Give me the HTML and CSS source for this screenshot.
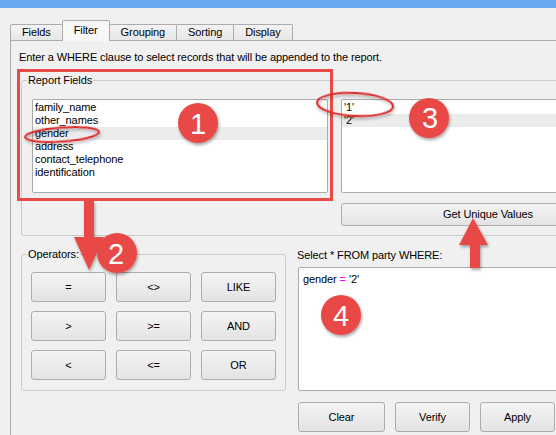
FILE: index.html
```html
<!DOCTYPE html>
<html>
<head>
<meta charset="utf-8">
<link rel="stylesheet" href="styles.css">
</head>
<body>
<div class="titlebar"></div>
<div class="tabs">
  <div class="tab first">Fields</div>
  <div class="tab active">Filter</div>
  <div class="tab">Grouping</div>
  <div class="tab">Sorting</div>
  <div class="tab">Display</div>
</div>
<div class="pane">
  <p class="hint">Enter a WHERE clause to select records that will be appended to the report.</p>
  <div class="group report">
    <span class="group-title">Report Fields</span>
    <div class="report-grid">
      <ul class="list fields">
        <li>family_name</li>
        <li>other_names</li>
        <li class="sel">gender</li>
        <li>address</li>
        <li>contact_telephone</li>
        <li>identification</li>
      </ul>
      <div class="values-col">
        <ul class="list values">
          <li>'1'</li>
          <li class="sel">'2'</li>
        </ul>
        <button class="btn unique">Get Unique Values</button>
      </div>
    </div>
  </div>
  <div class="lower">
    <div class="group operators">
      <span class="group-title">Operators:</span>
      <div class="op-grid">
        <button class="btn op-btn">=</button>
        <button class="btn op-btn">&lt;&gt;</button>
        <button class="btn op-btn">LIKE</button>
        <button class="btn op-btn">&gt;</button>
        <button class="btn op-btn">&gt;=</button>
        <button class="btn op-btn">AND</button>
        <button class="btn op-btn">&lt;</button>
        <button class="btn op-btn">&lt;=</button>
        <button class="btn op-btn">OR</button>
      </div>
    </div>
    <div class="sql">
      <div class="sql-label">Select * FROM party WHERE:</div>
      <div class="sql-box">gender <span class="kw">=</span> '2'</div>
      <div class="sql-actions">
        <button class="btn act clear">Clear</button>
        <button class="btn act">Verify</button>
        <button class="btn act">Apply</button>
      </div>
    </div>
  </div>
</div>
<svg class="annotations" width="556" height="435" viewBox="0 0 556 435">
  <defs>
    <filter id="sh" x="-30%" y="-30%" width="160%" height="180%">
      <feDropShadow dx="1" dy="2" stdDeviation="1.5" flood-color="#000" flood-opacity="0.35"/>
    </filter>
  </defs>
  <rect x="18.5" y="70.5" width="313" height="129" fill="none" stroke="#e84a46" stroke-width="3"/>
  <ellipse cx="62" cy="134.5" rx="37" ry="7" transform="rotate(-4 62 134.5)" fill="none" stroke="#dc2a2a" stroke-width="2" filter="url(#sh)"/>
  <ellipse cx="355" cy="104.5" rx="38" ry="11.5" transform="rotate(3 355 104.5)" fill="none" stroke="#dc2a2a" stroke-width="2" filter="url(#sh)"/>
  <path d="M84 201 H94 V237 H104 L89 270 L74 237 H84 Z" fill="#e84a46" filter="url(#sh)"/>
  <path d="M473 218 L488 245 H480 V268 H470 V245 H459 Z" fill="#e84a46" filter="url(#sh)"/>
  <g class="badge" filter="url(#sh)">
    <circle cx="198" cy="123" r="20" fill="#e84a46"/>
    <circle cx="117" cy="253" r="20" fill="#e84a46"/>
    <circle cx="429" cy="118" r="20" fill="#e84a46"/>
    <circle cx="341" cy="315" r="20" fill="#e84a46"/>
  </g>
  <g class="badge-num">
    <text x="198" y="133.5">1</text>
    <text x="116" y="263.5">2</text>
    <text x="430" y="128">3</text>
    <text x="341" y="325.5">4</text>
  </g>
</svg>
</body>
</html>
```

FILE: styles.css
```css
html, body {
  margin: 0;
  padding: 0;
}
body {
  width: 556px;
  height: 435px;
  overflow: hidden;
  position: relative;
  background: #f0f0f0;
  font-family: "Liberation Sans", Arial, sans-serif;
  font-size: 11px;
  line-height: 13px;
  letter-spacing: -0.1px;
  color: #000;
}
.titlebar {
  height: 8px;
  background: #69a9f1;
}
.tabs {
  display: flex;
  align-items: flex-end;
  height: 20px;
  margin: 12px 0 0 10px;
  position: relative;
  z-index: 1;
}
.tab {
  height: 15px;
  line-height: 15px;
  padding: 0 11px;
  border: 1px solid #acacac;
  border-bottom: none;
  border-radius: 2px 2px 0 0;
  background: linear-gradient(#f3f3f3, #e6e6e6);
  margin-left: -1px;
  white-space: nowrap;
}
.tab.first {
  margin-left: 0;
}
.tab.active {
  height: 20px;
  line-height: 19px;
  margin-bottom: -1px;
  background: #f7f7f7;
  position: relative;
  z-index: 2;
}
.pane {
  margin-left: 10px;
  border-top: 1px solid #acacac;
  border-left: 1px solid #acacac;
  padding: 10px 0 0 10px;
  height: 400px;
}
.hint {
  margin: 0 0 16px -2px;
  white-space: nowrap;
}
.group {
  position: relative;
  border: 1px solid #cbcbcb;
  border-radius: 3px;
}
.group-title {
  position: absolute;
  top: -7px;
  left: 5px;
  padding: 0 1px;
  background: #f0f0f0;
  white-space: nowrap;
}
.report {
  width: 603px;
  padding: 18px 10px 9px 10px;
}
.report-grid {
  display: grid;
  grid-template-columns: 296px 294px;
  column-gap: 13px;
  align-items: start;
}
.values-col {
  display: flex;
  flex-direction: column;
  gap: 10px;
}
.list {
  list-style: none;
  margin: 0;
  padding: 1px 0;
  height: 94px;
  box-sizing: border-box;
  background: #fff;
  border: 1px solid #ababab;
  border-radius: 2px;
}
.list li {
  height: 13px;
  padding-left: 2px;
  white-space: nowrap;
}
.list li.sel {
  background: #ececec;
}
.btn {
  font: inherit;
  letter-spacing: inherit;
  color: #000;
  padding: 0;
  margin: 0;
  background: linear-gradient(#f4f4f4, #e3e3e3);
  border: 1px solid #adadad;
  border-radius: 3px;
  box-sizing: border-box;
}
.unique {
  width: 294px;
  height: 23px;
}
.lower {
  display: flex;
  align-items: flex-start;
  gap: 12px;
  margin-top: 13px;
}
.operators {
  margin-top: 5px;
  padding: 17px 9px 10px 9px;
}
.op-grid {
  display: grid;
  grid-template-columns: repeat(3, 75px);
  grid-auto-rows: 30px;
  column-gap: 10px;
  row-gap: 9px;
}
.sql {
  width: 340px;
  flex: none;
}
.sql-label {
  margin-left: -1px;
  white-space: nowrap;
}
.sql-box {
  margin-top: 5px;
  height: 124px;
  box-sizing: border-box;
  padding: 5px 4px;
  background: #fff;
  border: 1px solid #ababab;
  border-radius: 2px;
  white-space: pre;
}
.kw {
  color: #ff00ff;
}
.sql-actions {
  display: flex;
  gap: 10px;
  margin-top: 11px;
}
.act {
  width: 75px;
  height: 30px;
}
.act.clear {
  width: 87px;
}
.annotations {
  position: absolute;
  left: 0;
  top: 0;
  pointer-events: none;
}
.badge-num text {
  font-family: "Liberation Sans", Arial, sans-serif;
  font-size: 29px;
  letter-spacing: 0;
  fill: #fff;
  text-anchor: middle;
}
```
